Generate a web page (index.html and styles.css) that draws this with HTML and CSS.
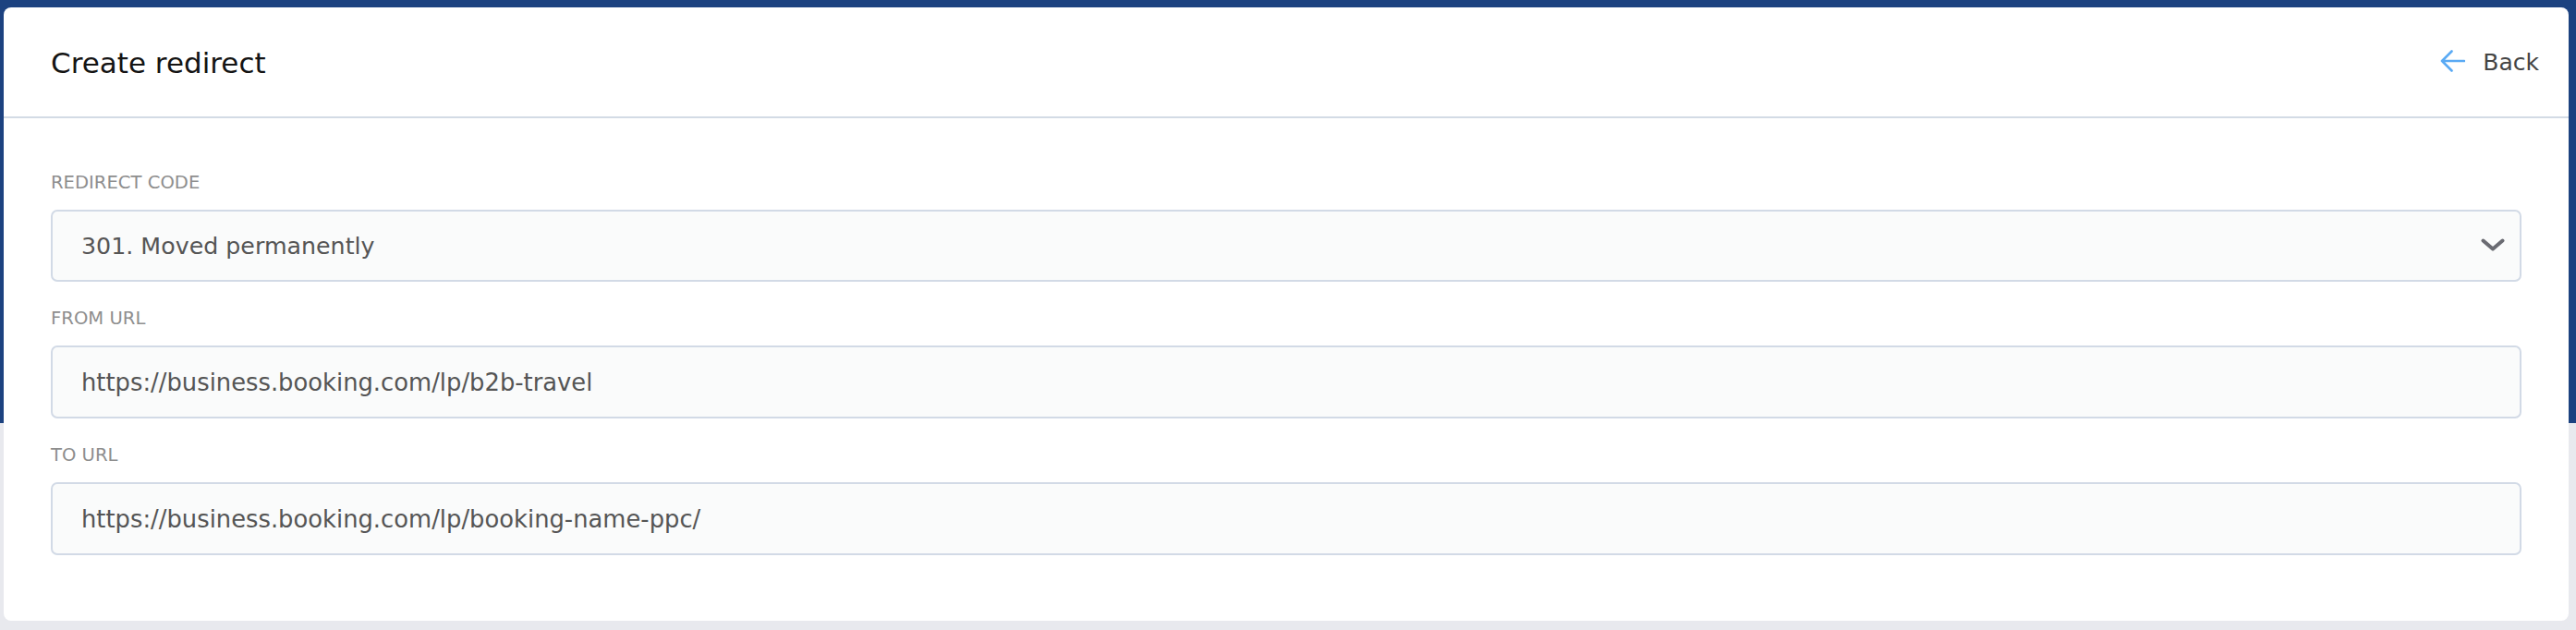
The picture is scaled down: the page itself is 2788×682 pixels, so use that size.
FILE: index.html
```html
<!DOCTYPE html>
<html lang="en">
<head>
<meta charset="UTF-8">
<meta name="viewport" content="width=device-width, initial-scale=1.0">
<title>Create redirect</title>
<link rel="stylesheet" href="styles.css">
</head>
<body>
<div class="card">
    <div class="card-header">
        <h2>Create redirect</h2>
        <a href="#" class="back-link">
            <svg class="back-icon" width="27" height="24" viewBox="0 0 27 24">
                <path d="M26 12H2M12.5 1.5L2 12l10.5 10.5" fill="none" stroke="#5aaaf4" stroke-width="2.6" stroke-linecap="round" stroke-linejoin="round"/>
            </svg>
            Back
        </a>
    </div>

    <form class="card-body">
        <div class="field">
            <label for="redirect-code">Redirect code</label>
            <div class="select-wrap">
                <select id="redirect-code" class="field-input">
                    <option>301. Moved permanently</option>
                    <option>302. Found</option>
                </select>
                <svg class="select-arrow" width="26" height="14" viewBox="0 0 26 14">
                    <path d="M2.5 2.5L13 11.5 23.5 2.5" fill="none" stroke="#6a6b72" stroke-width="4" stroke-linecap="round" stroke-linejoin="round"/>
                </svg>
            </div>
        </div>

        <div class="field">
            <label for="from-url">From URL</label>
            <input type="text" id="from-url" class="field-input" value="https://business.booking.com/lp/b2b-travel">
        </div>

        <div class="field">
            <label for="to-url">To URL</label>
            <input type="text" id="to-url" class="field-input" value="https://business.booking.com/lp/booking-name-ppc/">
        </div>
    </form>
</div>
</body>
</html>
```

FILE: styles.css
```css
body {
    margin: 0;
    padding: 8px 8px 10px 4px;
    min-height: 100vh;
    box-sizing: border-box;
    font-family: "DejaVu Sans", sans-serif;
    background: linear-gradient(to bottom, #1c4280 0, #1c4280 458px, #e8e9ee 458px);
}

.card {
    background: white;
    border-radius: 8px;
    overflow: hidden;
}

.card-header {
    height: 118px;
    display: flex;
    justify-content: space-between;
    align-items: center;
    padding: 0 32px 0 51px;
    border-bottom: 2px solid #d3dbe5;
}

.card-header h2 {
    margin: 0;
    padding-top: 2px;
    font-size: 31px;
    font-weight: normal;
    color: #141414;
}

.back-link {
    display: flex;
    align-items: center;
    gap: 19px;
    font-size: 25px;
    color: #454545;
    text-decoration: none;
}

.back-icon {
    display: block;
    margin-top: -2px;
}

.card-body {
    display: flex;
    flex-direction: column;
    gap: 28px;
    padding: 58px 51px 71px;
}

.field label {
    display: block;
    margin-bottom: 17px;
    font-size: 19.6px;
    line-height: 24px;
    text-transform: uppercase;
    color: #8e8e8e;
}

.field-input {
    display: block;
    width: 100%;
    height: 79px;
    box-sizing: border-box;
    padding: 0 31px;
    border: 2px solid #d2dae6;
    border-radius: 7px;
    background: #fafbfb;
    font-family: inherit;
    font-size: 25.8px;
    color: #555;
    outline: none;
}

.select-wrap {
    position: relative;
}

.select-wrap select {
    height: 78px;
    font-size: 25.3px;
    appearance: none;
    -webkit-appearance: none;
    cursor: pointer;
}

.select-arrow {
    position: absolute;
    right: 18px;
    top: 31px;
    pointer-events: none;
}
```
